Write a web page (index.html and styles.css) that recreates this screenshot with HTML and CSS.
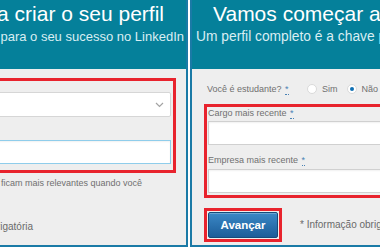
FILE: index.html
```html
<!DOCTYPE html>
<html lang="pt">
<head>
<meta charset="utf-8">
<title>Vamos começar a criar o seu perfil</title>
<link rel="stylesheet" href="styles.css">
</head>
<body>
<div class="stage">
  <section class="panel panel-left">
    <header class="hero hero-end">
      <h1 class="hero-title title-end">Vamos começar a criar o seu perfil</h1>
      <p class="hero-sub sub-end">Um perfil completo é a chave para o seu sucesso no LinkedIn</p>
    </header>
    <div class="form form-end">
      <div class="mark mark-end">
        <div class="select">
          <svg class="chev" width="9" height="6" viewBox="0 0 9 6"><path d="M1 1 L4.5 4.5 L8 1" fill="none" stroke="#a3a3a3" stroke-width="1.2"/></svg>
        </div>
        <div class="field field-focus"></div>
      </div>
      <p class="help">Suas informações ficam mais relevantes quando você</p>
      <p class="note note-end">* Informação obrigatória</p>
    </div>
  </section>
  <section class="panel panel-right">
    <header class="hero">
      <h1 class="hero-title title-start">Vamos começar a criar o seu perfil</h1>
      <p class="hero-sub sub-start">Um perfil completo é a chave para o seu sucesso no LinkedIn</p>
    </header>
    <div class="form form-start">
      <div class="question">
        <span class="q-label">Você é estudante? <abbr class="req">*</abbr></span>
        <span class="radio"></span><span class="r-text">Sim</span>
        <span class="radio radio-on"></span><span class="r-text">Não</span>
      </div>
      <div class="mark mark-start">
        <label class="f-label">Cargo mais recente <abbr class="req">*</abbr></label>
        <div class="field"></div>
        <label class="f-label f-label-2">Empresa mais recente <abbr class="req">*</abbr></label>
        <div class="field field-2"></div>
      </div>
      <div class="actions">
        <div class="mark mark-btn"><button class="btn" type="button">Avançar</button></div>
        <p class="note">* Informação obrigatória</p>
      </div>
    </div>
  </section>
</div>
</body>
</html>
```
FILE: styles.css
```css
html, body {
  margin: 0;
  padding: 0;
  background: #ffffff;
  overflow: hidden;
}
body {
  font-family: "Liberation Sans", Arial, sans-serif;
}
.stage {
  width: 380px;
  height: 249px;
  overflow: hidden;
  display: flex;
  gap: 2px;
  align-items: flex-start;
}
.panel {
  height: 245px;
  background: #eeeeee;
  overflow: hidden;
  display: flex;
  flex-direction: column;
  border-bottom: 2px solid #1a7aa6;
  flex-shrink: 0;
}
.panel-left {
  width: 186px;
  border-right: 2px solid #1a7aa6;
}
.panel-right {
  width: 260px;
  border-left: 2px solid #1a7aa6;
}
.hero {
  height: 69px;
  box-sizing: border-box;
  background: #05809a;
  color: #ffffff;
  padding-top: 2px;
  display: flex;
  flex-direction: column;
  align-items: flex-start;
  white-space: nowrap;
  flex-shrink: 0;
}
.hero-end {
  align-items: flex-end;
}
.hero-title {
  margin: 0;
  font-size: 21px;
  line-height: 24px;
  font-weight: normal;
}
.hero-sub {
  margin: 3px 0 0;
  font-size: 13.8px;
  line-height: 16px;
  color: #d9eef3;
}
.title-end { margin-right: 22px; }
.sub-end { margin-right: 2px; font-size: 13px; }
.title-start { margin-left: 21px; }
.sub-start { margin-left: 4px; }

.form {
  display: flex;
  flex-direction: column;
  white-space: nowrap;
}
.form-end {
  align-items: flex-end;
}
.form-start {
  align-items: flex-start;
  padding-left: 12px;
}
.mark {
  border: 3px solid #e8232d;
  box-sizing: border-box;
}
.mark-end {
  margin-top: 9px;
  margin-right: 10px;
  width: 220px;
  padding: 11px 2px 0 0;
  height: 95px;
}
.select {
  height: 25px;
  box-sizing: border-box;
  background: #ffffff;
  border: 1px solid #d6d6d6;
  border-radius: 2px;
  display: flex;
  align-items: center;
  justify-content: flex-end;
  padding-right: 6px;
}
.field {
  height: 24px;
  box-sizing: border-box;
  background: #ffffff;
  border: 1px solid #d0d0d0;
  box-shadow: inset 0 1px 2px rgba(0,0,0,0.06);
}
.field-focus {
  margin-top: 23px;
  border-color: #8fcdeb;
}
.help {
  margin: 4px 44px 0 0;
  font-size: 9px;
  line-height: 12px;
  color: #707070;
}
.note {
  margin: 0;
  font-size: 10px;
  line-height: 12px;
  color: #6a6a6a;
}
.note-end {
  margin: 32px 153px 0 0;
}
.question {
  margin: 14px 0 0 3px;
  display: flex;
  align-items: center;
  font-size: 9px;
  line-height: 12px;
  color: #707070;
}
.q-label {
  width: 100px;
}
.req {
  color: #4a82b4;
  text-decoration: none;
  border-bottom: 1px dotted #4a82b4;
  margin-left: 1px;
}
.radio {
  width: 10px;
  height: 10px;
  box-sizing: border-box;
  border-radius: 50%;
  border: 1px solid #dadada;
  background: #ffffff;
  margin-right: 5px;
  display: flex;
  align-items: center;
  justify-content: center;
}
.radio-on::after {
  content: "";
  width: 4px;
  height: 4px;
  border-radius: 50%;
  background: #0f6fb3;
}
.r-text {
  margin-right: 9px;
}
.mark-start {
  margin-top: 9px;
  width: 300px;
  padding: 0 0 2px 1px;
  display: flex;
  flex-direction: column;
}
.f-label {
  display: block;
  font-size: 9px;
  line-height: 12px;
  color: #707070;
}
.f-label-2 {
  margin-top: 9px;
}
.mark-start .field {
  margin-top: 2px;
}
.mark-start .field-2 {
  margin-top: 3px;
}
.actions {
  margin-top: 10px;
  display: flex;
  align-items: center;
  gap: 18px;
}
.mark-btn {
  padding: 1px;
}
.btn {
  display: block;
  width: 70px;
  height: 26px;
  margin: 0;
  padding: 0;
  border: 1px solid #164b7a;
  border-radius: 2px;
  background: linear-gradient(#3b88c6, #1c5d99);
  box-shadow: inset 0 1px 0 rgba(255,255,255,0.25);
  color: #ffffff;
  font-family: "Liberation Sans", Arial, sans-serif;
  font-size: 11.5px;
  font-weight: bold;
}
```
